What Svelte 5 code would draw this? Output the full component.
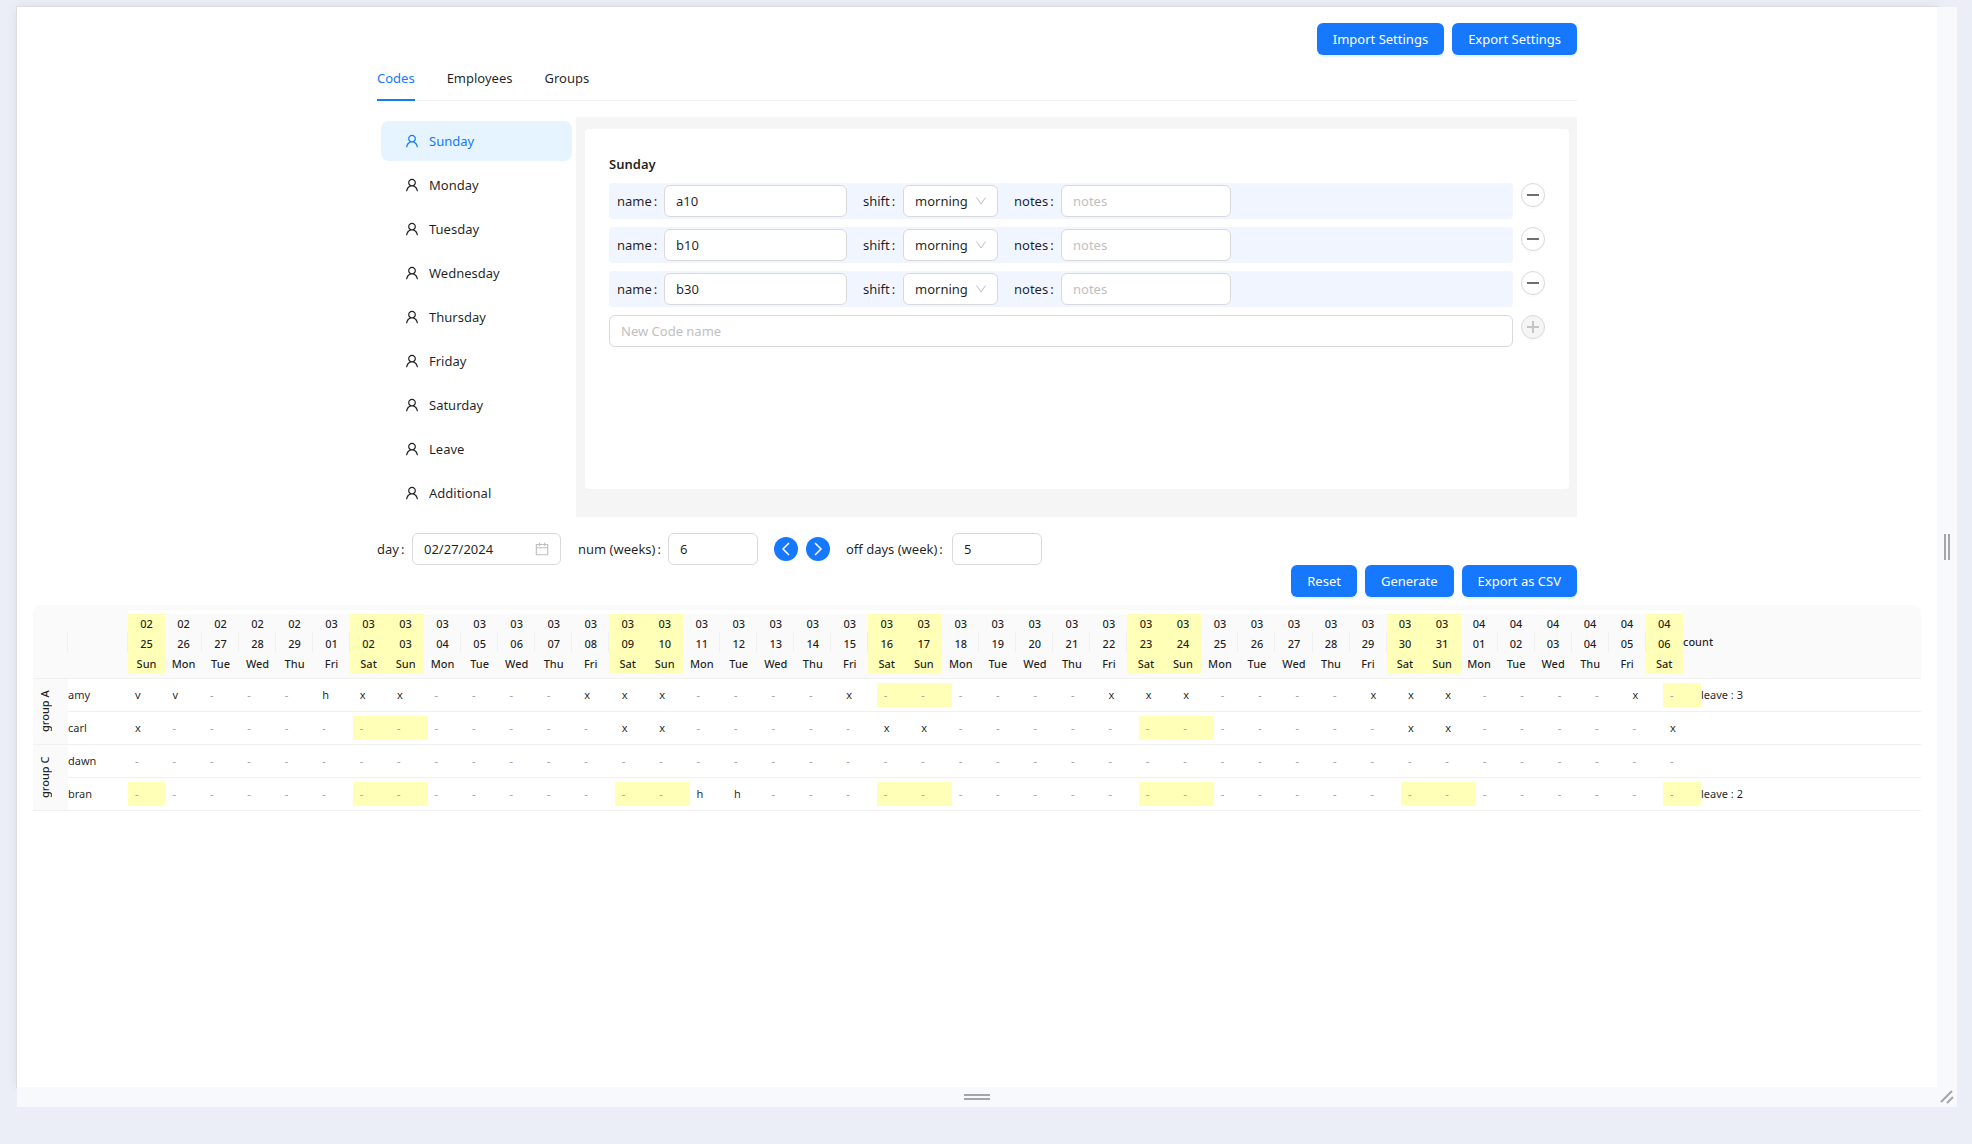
<script>
  const dayNames = ['Sun', 'Mon', 'Tue', 'Wed', 'Thu', 'Fri', 'Sat'];
  const pad = (n) => String(n).padStart(2, '0');
  const dates = Array.from({ length: 42 }, (_, i) => {
    const d = new Date(2024, 1, 25 + i);
    return { month: pad(d.getMonth() + 1), day: pad(d.getDate()), name: dayNames[d.getDay()], weekend: d.getDay() % 6 === 0 };
  });

  const menu = ['Sunday', 'Monday', 'Tuesday', 'Wednesday', 'Thursday', 'Friday', 'Saturday', 'Leave', 'Additional'];
  let current = $state('Sunday');
  let tab = $state('Codes');
  let codes = $state([
    { name: 'a10', shift: 'morning', notes: '' },
    { name: 'b10', shift: 'morning', notes: '' },
    { name: 'b30', shift: 'morning', notes: '' }
  ]);

  const people = [
    { name: 'amy', group: 'group A', marks: { v: [0, 1], h: [5], x: [6, 7, 12, 13, 14, 19, 26, 27, 28, 33, 34, 35, 40] }, off: [20, 21, 41], count: 'leave : 3' },
    { name: 'carl', marks: { x: [0, 13, 14, 20, 21, 34, 35, 41] }, off: [6, 7, 27, 28], count: '' },
    { name: 'dawn', group: 'group C', marks: {}, off: [], count: '' },
    { name: 'bran', marks: { h: [15, 16] }, off: [0, 6, 7, 13, 14, 20, 21, 27, 28, 34, 35, 41], count: 'leave : 2' }
  ];
  const markOf = (p, i) => Object.keys(p.marks).find((k) => p.marks[k].includes(i)) ?? '-';
</script>

<div class="viewport">
  <main class="page">
    <div class="container">
      <div class="actions">
        <button class="primary">Import Settings</button>
        <button class="primary">Export Settings</button>
      </div>

      <div class="tabs" role="tablist">
        {#each ['Codes', 'Employees', 'Groups'] as t}
          <button role="tab" class="tab" class:active={tab === t} aria-selected={tab === t} onclick={() => (tab = t)}>{t}</button>
        {/each}
      </div>

      <div class="layout">
        <nav class="menu">
          {#each menu as item}
            <button class="item" class:selected={current === item} onclick={() => (current = item)}>
              <svg viewBox="64 64 896 896" width="14" height="14" fill="currentColor" aria-hidden="true">
                <path d="M858.5 763.6a374 374 0 00-80.6-119.5 375.63 375.63 0 00-119.5-80.6c-.4-.2-.8-.3-1.2-.5C719.500 518 760 444.700 760 362c0-137-111-248-248-248S264 225 264 362c0 82.700 40.500 156 102.800 201.100-.4.200-.8.300-1.200.500-44.800 18.900-85 46-119.500 80.600a375.630 375.630 0 00-80.600 119.500A371.700 371.700 0 00136 901.800a8 8 0 008 8.200h60c4.400 0 7.900-3.500 8-7.800 2-77.200 33-149.500 87.800-204.300 56.700-56.700 132-87.900 212.200-87.900s155.500 31.200 212.200 87.900C779 752.700 810 825 812 902.200c.1 4.400 3.600 7.800 8 7.800h60a8 8 0 008-8.200c-1-47.800-10.900-94.300-29.500-138.200zM512 534c-45.900 0-89.100-17.900-121.600-50.400S340 407.900 340 362c0-45.900 17.900-89.100 50.400-121.600S466.100 190 512 190s89.100 17.900 121.600 50.400S684 316.100 684 362c0 45.900-17.900 89.100-50.400 121.600S557.900 534 512 534z" />
              </svg>
              <span>{item}</span>
            </button>
          {/each}
        </nav>

        <div class="content">
          <section class="card">
            <h2>{current}</h2>
            {#each codes as code, i}
              <div class="line">
                <div class="code">
                  <label for="name{i}">name<i>:</i></label>
                  <input id="name{i}" class="box name" bind:value={code.name} />
                  <label for="shift{i}">shift<i>:</i></label>
                  <span class="pick">
                    <select id="shift{i}" class="box" bind:value={code.shift}>
                      <option>morning</option>
                      <option>evening</option>
                    </select>
                    <svg viewBox="0 0 12 12" width="12" height="12" aria-hidden="true"><path d="M1.500 2.500 6 9l4.500-6.500" /></svg>
                  </span>
                  <label for="notes{i}">notes<i>:</i></label>
                  <textarea id="notes{i}" class="box notes" rows="1" placeholder="notes" bind:value={code.notes}></textarea>
                </div>
                <button class="round" aria-label="Remove {code.name}" onclick={() => codes.splice(i, 1)}>
                  <svg viewBox="0 0 14 14" width="14" height="14" aria-hidden="true"><path d="M1 7h12" stroke-width="2" /></svg>
                </button>
              </div>
            {/each}
            <div class="line">
              <input class="box new" placeholder="New Code name" aria-label="New Code name" />
              <button class="round" disabled aria-label="Add code">
                <svg viewBox="0 0 14 14" width="14" height="14" aria-hidden="true"><path d="M1 7h12M7 1v12" stroke-width="2" /></svg>
              </button>
            </div>
          </section>
        </div>
      </div>

      <div class="params">
        <label for="day">day<i>:</i></label>
        <span class="date">
          <input id="day" class="box" value="02/27/2024" />
          <svg class="calendar" viewBox="64 64 896 896" width="14" height="14" aria-hidden="true"><path d="M880 184H712v-64c0-4.400-3.600-8-8-8h-56c-4.400 0-8 3.600-8 8v64H384v-64c0-4.400-3.600-8-8-8h-56c-4.400 0-8 3.600-8 8v64H144c-17.700 0-32 14.300-32 32v664c0 17.700 14.300 32 32 32h736c17.700 0 32-14.300 32-32V216c0-17.700-14.300-32-32-32zm-40 656H184V460h656v380zM184 392V256h128v48c0 4.400 3.600 8 8 8h56c4.400 0 8-3.600 8-8v-48h256v48c0 4.400 3.600 8 8 8h56c4.400 0 8-3.600 8-8v-48h128v136H184z" /></svg>
        </span>
        <label for="num">num (weeks)<i>:</i></label>
        <input id="num" class="box number" value="6" />
        <button class="arrow" aria-label="Previous"><svg viewBox="0 0 16 16" width="16" height="16" aria-hidden="true"><path d="M11 2 5 8l6 6" /></svg></button>
        <button class="arrow" aria-label="Next"><svg viewBox="0 0 16 16" width="16" height="16" aria-hidden="true"><path d="m5 2 6 6-6 6" /></svg></button>
        <label for="off" class="off-label">off days (week)<i>:</i></label>
        <input id="off" class="box number" value="5" />
      </div>

      <div class="actions">
        <button class="primary">Reset</button>
        <button class="primary">Generate</button>
        <button class="primary">Export as CSV</button>
      </div>
    </div>

    <div class="schedule">
      <table class="head">
        <colgroup><col class="c-group" /><col class="c-name" />{#each dates as _}<col />{/each}<col class="c-total" /></colgroup>
        <thead>
          <tr>
            <th class="split"></th>
            <th class="split"></th>
            {#each dates as d}
              <th class="split date-cell"><div class:weekend={d.weekend}>{d.month}<br />{d.day}<br />{d.name}</div></th>
            {/each}
            <th class="total">count</th>
          </tr>
        </thead>
      </table>
      <table class="body">
        <colgroup><col class="c-group" /><col class="c-name" />{#each dates as _}<col />{/each}<col class="c-count" /></colgroup>
        <tbody>
          {#each people as p}
            <tr>
              {#if p.group}<th class="group" rowspan="2" scope="rowgroup"><span>{p.group}</span></th>{/if}
              <td>{p.name}</td>
              {#each dates as _, i}
                {@const mark = markOf(p, i)}
                <td><div class="mark" class:empty={mark === '-'} class:weekend={p.off.includes(i)}>{mark}</div></td>
              {/each}
              <td>{p.count}</td>
            </tr>
          {/each}
        </tbody>
      </table>
    </div>
  </main>
  <div class="edge right"><svg viewBox="0 0 6 26" width="6" height="26" aria-hidden="true"><path d="M1 0v26M5 0v26" /></svg></div>
  <div class="edge bottom"><svg viewBox="0 0 26 6" width="26" height="6" aria-hidden="true"><path d="M0 1h26M0 5h26" /></svg></div>
  <div class="edge corner"><svg viewBox="0 0 14 14" width="14" height="14" aria-hidden="true"><path d="M1 12 12 1M7 13l6-6" /></svg></div>
</div>

<style>
  :global(body) { margin: 0; background: #ebeef7; }
  * { box-sizing: border-box; }
  .viewport {
    display: grid;
    grid-template-columns: minmax(0, 1fr) 20px;
    grid-template-rows: minmax(calc(100vh - 64px), auto) 20px;
    padding: 7px 15px 37px 17px;
    font: 13px/22px "Noto Sans", "Open Sans", sans-serif;
    color: rgba(0, 0, 0, 0.88);
  }
  button, input, select, textarea { font: inherit; color: inherit; margin: 0; }
  button { cursor: pointer; }
  .page { background: #fff; padding: 16px; box-shadow: 0 0 0 1px #dcdde3, 0 0 12px rgba(0, 0, 0, 0.08); }
  .edge { display: flex; align-items: center; justify-content: center; background: #f8f9fd; position: relative; }
  .edge svg { fill: none; stroke: #a5a5a5; stroke-width: 2; }
  .container { max-width: 1200px; margin: 0 auto; }
  .actions { display: flex; justify-content: flex-end; gap: 8px; }
  .primary {
    height: 32px;
    padding: 0 16px;
    border: 0;
    border-radius: 6px;
    background: #1677ff;
    color: #fff;
    box-shadow: 0 2px 0 rgba(5, 145, 255, 0.1);
  }
  .tabs { display: flex; gap: 32px; border-bottom: 1px solid #f0f0f0; margin-bottom: 16px; }
  .tab { border: 0; background: none; padding: 12px 0; height: 46px; margin-bottom: -1px; }
  .tab.active { color: #1677ff; box-shadow: inset 0 -2px #1677ff; }
  .layout { display: grid; grid-template-columns: 199px minmax(0, 1fr); min-height: 400px; }
  .menu { display: grid; gap: 4px; padding: 4px; align-content: start; }
  .item {
    display: flex;
    align-items: center;
    gap: 10px;
    height: 40px;
    padding: 0 24px;
    border: 0;
    border-radius: 8px;
    background: none;
  }
  .item.selected { background: #e6f4ff; color: #1677ff; }
  .content { background: #f5f5f5; padding: 12px 8px 28px 9px; }
  .card { background: #fff; border-radius: 4px; padding: 24px; height: 100%; }
  h2 { font-size: 13px; line-height: 22px; font-weight: 600; margin: 0 0 8px; }
  label i { font-style: normal; margin-left: 2px; }
  .line { display: grid; grid-template-columns: minmax(0, 1fr) 24px; gap: 8px; align-items: start; margin-bottom: 8px; }
  .code { display: flex; align-items: center; height: 36px; padding: 0 8px; background: #f0f5ff; border-radius: 4px; }
  .code label { width: 47px; }
  .box {
    height: 32px;
    border: 1px solid #d9d9d9;
    border-radius: 6px;
    background: #fff;
    padding: 4px 11px;
    outline: 0;
  }
  .box::placeholder { color: #bfbfbf; }
  .name { width: 183px; margin-right: 16px; }
  .code label[for^="shift"] { width: 40px; }
  .pick { display: grid; width: 95px; margin-right: 16px; }
  .pick > *, .date > * { grid-area: 1 / 1; }
  .pick select { appearance: none; width: 100%; padding: 0 11px; }
  .pick svg, .date svg { justify-self: end; align-self: center; margin-right: 11px; fill: none; stroke: #bfbfbf; pointer-events: none; }
  .date .calendar { fill: #bfbfbf; stroke: none; margin-right: 12px; }
  .notes { width: 170px; resize: vertical; overflow: hidden; }
  .notes::-webkit-resizer { background: transparent; }
  .new { width: 100%; }
  .round {
    display: grid;
    place-items: center;
    width: 24px;
    height: 24px;
    padding: 0;
    border: 1px solid #d9d9d9;
    border-radius: 50%;
    background: #fff;
    box-shadow: 0 2px 0 rgba(0, 0, 0, 0.02);
  }
  .round svg { stroke: #6f6f6f; }
  .round:disabled { background: #f5f5f5; }
  .round:disabled svg { stroke: #c4c4c4; }
  .params { display: flex; align-items: center; padding-top: 16px; }
  .params label { flex: none; width: 35px; }
  .params label[for="num"] { width: 90px; }
  .params .off-label { width: 106px; }
  .date { display: grid; width: 149px; margin-right: 17px; }
  .date input { width: 100%; }
  .number { width: 90px; margin-right: 16px; }
  .arrow {
    display: grid;
    place-items: center;
    width: 24px;
    height: 24px;
    padding: 0;
    margin-right: 8px;
    border: 0;
    border-radius: 50%;
    background: #1677ff;
  }
  .arrow svg { fill: none; stroke: #fff; stroke-width: 1.5; }
  .off-label { margin-left: 8px; }
  .schedule { margin-top: 8px; font-size: 11px; line-height: 20px; }
  table { width: 100%; table-layout: fixed; border-collapse: separate; border-spacing: 0; }
  th, td { padding: 0; text-align: left; }
  th { font-weight: 500; }
  .c-group { width: 35px; }
  .c-name { width: 60px; }
  .c-total { width: 238px; }
  .c-count { width: 220px; }
  .head { background: #fafafa; border-radius: 8px 8px 0 0; }
  .head th { height: 74px; border-bottom: 1px solid #f0f0f0; }
  .split { background: linear-gradient(#f0f0f0, #f0f0f0) right center / 1px 20px no-repeat; }
  .date-cell div { border-top: 4px solid #fff; text-align: center; height: 64px; }
  .weekend { background: #ffffb8; }
  .body td, .group { height: 33px; border-bottom: 1px solid #f0f0f0; }
  .group { background: #fafafa; vertical-align: top; }
  .group span { display: block; height: 65px; width: 24px; line-height: 24px; text-align: center; writing-mode: vertical-rl; transform: rotate(180deg); }
  .mark { height: 24px; line-height: 24px; padding-left: 7px; }
  .empty { color: #a0a0a0; }
</style>
